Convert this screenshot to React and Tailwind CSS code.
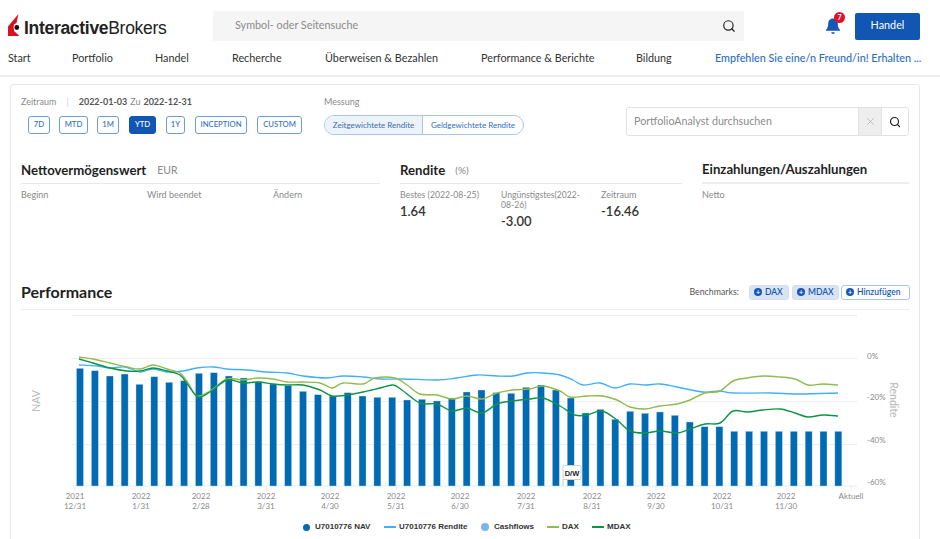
import React from 'react';
import { Search, X } from 'lucide-react';

const font = { fontFamily: 'Lato, sans-serif' };

const navItems = [
  { label: 'Start', cls: 'w-[64px]' },
  { label: 'Portfolio', cls: 'w-[83px]' },
  { label: 'Handel', cls: 'w-[77px]' },
  { label: 'Recherche', cls: 'w-[93px]' },
  { label: 'Überweisen & Bezahlen', cls: 'w-[156px]' },
  { label: 'Performance & Berichte', cls: 'w-[155px]' },
  { label: 'Bildung', cls: 'w-[79px]' },
];

const ranges = [
  { label: '7D', cls: 'w-[22px] mr-[9px]' },
  { label: 'MTD', cls: 'w-[29px] mr-[9px]' },
  { label: '1M', cls: 'w-[22px] mr-[10px]' },
  { label: 'YTD', cls: 'w-[27px] mr-[10px]', active: true },
  { label: '1Y', cls: 'w-[19px] mr-[10px]' },
  { label: 'INCEPTION', cls: 'w-[52px] mr-[10px]' },
  { label: 'CUSTOM', cls: 'w-[45px]' },
];

const tops = [
  368.3, 370.7, 376, 374, 384.3, 376.7, 382.3, 380.7, 373.3, 372.7, 376, 378, 381.7, 384, 385.7, 391.3, 394.7, 396,
  392.7, 396, 397.3, 397.3, 400, 399.3, 401, 398, 392, 390, 392.7, 393.3, 387.3, 385, 390, 398, 413, 409.3, 419.3, 411.3,
  413.3, 412, 415.3, 422, 426.7, 426.7, 431.3, 431.3, 431.3, 431.3, 431.3, 431.3, 431.3, 431.3,
];

// points read off the reference, in page pixels
const rendite = [
  [79, 365], [97, 366], [110, 368], [125, 367], [140, 372], [153, 369], [167, 372], [183, 371], [197, 368], [213, 367], [227, 369], [247, 370], [267, 372], [287, 373], [303, 376], [327, 378],
  [343, 376], [363, 377], [380, 379], [403, 379], [437, 380], [457, 378], [477, 375], [497, 376], [513, 376], [527, 373], [543, 373], [560, 375], [573, 380], [583, 385], [600, 383], [615, 388], [630, 384],
  [645, 385], [660, 384], [677, 387], [703, 392], [720, 391], [733, 393], [770, 393], [800, 394], [838, 393],
];
const dax = [
  [79, 357], [93, 359], [110, 363], [127, 367], [140, 369], [153, 365], [167, 369], [180, 373], [188, 383], [197, 396], [210, 391], [227, 379], [243, 380], [258, 378], [273, 379], [287, 382], [303, 382], [320, 383], [332, 388],
  [343, 383], [363, 384], [375, 378], [395, 378], [407, 385], [420, 394], [437, 395], [452, 399], [467, 396], [482, 399], [497, 393], [513, 390], [530, 389], [543, 386], [560, 391], [570, 397], [587, 396], [603, 396], [617, 400], [630, 407],
  [645, 409], [660, 406], [677, 404], [690, 400], [705, 393], [720, 391], [733, 381], [747, 378], [763, 376], [780, 377], [795, 379], [808, 385], [823, 384], [838, 385],
];
const mdax = [
  [79, 359], [93, 363], [110, 368], [127, 371], [140, 371], [153, 368], [167, 371], [180, 375], [188, 385], [198, 397], [210, 392], [227, 380], [243, 383], [258, 382], [273, 384], [287, 385], [303, 385], [320, 390], [332, 396],
  [347, 395], [363, 392], [380, 388], [393, 385], [402, 390], [420, 403], [437, 404], [452, 411], [467, 408], [482, 413], [497, 404], [513, 401], [530, 399], [543, 398], [560, 406], [575, 415], [587, 415], [602, 411], [617, 420], [630, 431],
  [645, 433], [660, 431], [677, 433], [690, 429], [705, 424], [720, 423], [733, 411], [747, 412], [763, 410], [780, 409], [795, 413], [808, 417], [823, 415], [838, 416],
];

// catmull-rom through the points so the lines stay soft
function smooth(pts) {
  let d = `M${pts[0][0]} ${pts[0][1]}`;
  for (let i = 0; i < pts.length - 1; i++) {
    const p0 = pts[i - 1] || pts[i];
    const p1 = pts[i];
    const p2 = pts[i + 1];
    const p3 = pts[i + 2] || p2;
    const c1x = p1[0] + (p2[0] - p0[0]) / 6;
    const c1y = p1[1] + (p2[1] - p0[1]) / 6;
    const c2x = p2[0] - (p3[0] - p1[0]) / 6;
    const c2y = p2[1] - (p3[1] - p1[1]) / 6;
    d += ` C${c1x} ${c1y} ${c2x} ${c2y} ${p2[0]} ${p2[1]}`;
  }
  return d;
}

const xTicks = [
  [75, '2021', '12/31'], [141, '2022', '1/31'], [201, '2022', '2/28'], [266, '2022', '3/31'], [330, '2022', '4/30'], [396, '2022', '5/31'],
  [460, '2022', '6/30'], [526, '2022', '7/31'], [592, '2022', '8/31'], [656, '2022', '9/30'], [722, '2022', '10/31'], [786, '2022', '11/30'],
];

const Logo = () => (
  <div className="flex items-end w-[213px] pl-[8px] h-[30px]">
    <svg width="12" height="22" viewBox="0 0 12 22" className="mb-[5px] shrink-0">
      <path d="M10.500 0 L0 12.500 V22 H11.500 L6 17 V10.500 L8.500 9 Z" fill="#d81222" />
      <circle cx="8.800" cy="13.500" r="3.200" fill="#ffffff" />
      <circle cx="8.800" cy="13.500" r="2.400" fill="#111111" />
    </svg>
    <div className="ml-[4px] mb-[2px] text-[17.500px] leading-[22px] tracking-[-0.3px] text-[#222]" style={{ fontFamily: '"Liberation Sans", sans-serif' }}>
      <span className="font-bold">Interactive</span>Brokers
    </div>
  </div>
);

const Chip = ({ label, cls, outline }) => (
  <div className={`h-[15px] rounded-[3px] flex items-center pl-[4px] gap-[3px] text-[8.500px] font-semibold text-[#1558b8] border ${outline ? 'border-[#a9c6ea] bg-white' : 'border-[#d3deee] bg-[#d9e3f2]'} ${cls}`}>
    <span className="w-[8px] h-[8px] rounded-full bg-[#1558b8] flex items-center justify-center text-white text-[8px] leading-none">+</span>
    {label}
  </div>
);

const LegendLine = ({ color }) => <span className="w-[12px] h-[2px] mr-[3px]" style={{ background: color }} />;

export default function App() {
  return (
    <div className="w-[940px] h-[539px] overflow-hidden bg-white text-[#333]" style={font}>
      <header className="h-[77px] border-b-2 border-[#eeeeee]">
        <div className="flex items-center h-[41px] pt-[11px]">
          <Logo />
          <div className="w-[531px] h-[30px] bg-[#f5f5f5] rounded-[2px] flex items-center justify-between pl-[22px] pr-[8px] text-[10.800px] text-[#8b8b8b]">
            <span className="pb-[2px]">Symbol- oder Seitensuche</span>
            <Search size={14} className="text-[#222]" />
          </div>
          <div className="relative ml-[81px] w-[16px] h-[18px]">
            <svg width="16" height="18" viewBox="0 0 16 18">
              <path d="M8 1.500c-3 0-4.800 2.300-4.800 5.200 0 3-.7 4.600-2.200 6v1.100h14v-1.100c-1.500-1.400-2.200-3-2.200-6C12.800 3.800 11 1.500 8 1.500z" fill="#1558b8" />
              <path d="M6.200 15.200h3.600a1.800 1.800 0 0 1-3.600 0z" fill="#1558b8" />
            </svg>
            <span className="absolute -top-[5px] left-[9px] w-[11px] h-[11px] rounded-full bg-[#e0112b] text-white text-[7px] font-bold flex items-center justify-center">7</span>
          </div>
          <button className="ml-[14px] w-[65px] h-[27px] pb-[2px] bg-[#1156b3] rounded-[2px] text-white text-[10.800px]">Handel</button>
        </div>
        <nav className="flex items-center h-[34px] pl-[8px] text-[10.800px] text-[#333]">
          {navItems.map((n) => (
            <span key={n.label} className={n.cls}>{n.label}</span>
          ))}
          <span className="text-[#2a6fc4] font-medium whitespace-nowrap">Empfehlen Sie eine/n Freund/in! Erhalten ...</span>
        </nav>
      </header>

      <main className="ml-[10px] mt-[7px] w-[910px] h-[500px] border border-[#e6e6e6] rounded-t-[3px] px-[10px]">
        <div className="flex h-[60px]">
          <div className="w-[303px] pt-[11px]">
            <div className="flex items-center h-[12px] text-[9px] text-[#8a8a8a]">
              <span>Zeitraum</span>
              <span className="mx-[10px] text-[#ccc]">|</span>
              <span className="font-bold text-[#555]">2022-01-03</span>
              <span className="mx-[3px]">Zu</span>
              <span className="font-bold text-[#555]">2022-12-31</span>
            </div>
            <div className="flex mt-[8px] ml-[7px]">
              {ranges.map((r) => (
                <button key={r.label} className={`h-[18px] rounded-[3px] border text-[7.700px] font-medium ${r.active ? 'bg-[#1156b3] border-[#1156b3] text-white font-bold' : 'border-[#6f9ddb] text-[#2f6fc2]'} ${r.cls}`}>
                  {r.label}
                </button>
              ))}
            </div>
          </div>
          <div className="w-[302px] pt-[11px]">
            <div className="h-[12px] flex items-center text-[9px] text-[#8a8a8a]">Messung</div>
            <div className="flex mt-[7px] w-[200px] h-[20px] rounded-full border border-[#a9c6ea] text-[8px] text-[#2f6fc2] overflow-hidden">
              <div className="w-[98px] bg-[#edf3fb] flex items-center justify-center text-[#3a6da8] border-r border-[#a9c6ea]">Zeitgewichtete Rendite</div>
              <div className="flex-1 flex items-center justify-center">Geldgewichtete Rendite</div>
            </div>
          </div>
          <div className="mt-[22px] w-[283px] h-[29px] flex border border-[#e2e2e2] rounded-[3px] overflow-hidden">
            <div className="w-[231px] flex items-center pl-[7px] text-[10.700px] text-[#8b8b8b]">PortfolioAnalyst durchsuchen</div>
            <div className="w-[24px] bg-[#eeeeee] border-x border-[#e2e2e2] flex items-center justify-center text-[#b5b5b5]"><X size={11} /></div>
            <div className="flex-1 flex items-center justify-center text-[#222]"><Search size={12} strokeWidth={2.4} /></div>
          </div>
        </div>

        <div className="flex mt-[17px] h-[123px]">
          <section className="w-[359px]">
            <div className="h-[22px] flex items-center border-b border-[#e8e8e8] pb-[4px]">
              <span className="text-[13.200px] font-bold text-[#1f1f1f]">Nettovermögenswert</span>
              <span className="ml-[11px] text-[10.500px] text-[#8a8a8a]">EUR</span>
            </div>
            <div className="flex mt-[6px] text-[9px] text-[#8a8a8a] leading-[10px]">
              <span className="w-[126px]">Beginn</span>
              <span className="w-[126px]">Wird beendet</span>
              <span>Ändern</span>
            </div>
          </section>
          <section className="ml-[20px] w-[282px]">
            <div className="h-[22px] flex items-center border-b border-[#e8e8e8] pb-[4px]">
              <span className="text-[13.200px] font-bold text-[#1f1f1f]">Rendite</span>
              <span className="ml-[10px] text-[10px] text-[#8a8a8a]">(%)</span>
            </div>
            <div className="flex mt-[6px] text-[9px] text-[#8a8a8a] leading-[10px]">
              <div className="w-[101px]">
                <div className="text-[8.700px]">Bestes (2022-08-25)</div>
                <div className="mt-[6px] text-[13px] leading-[11px] font-semibold text-[#333]">1.64</div>
              </div>
              <div className="w-[100px]">
                <div className="w-[88px] text-[8.600px]">Ungünstigstes(2022-08-26)</div>
                <div className="mt-[6px] text-[13px] leading-[11px] font-semibold text-[#333]">-3.00</div>
              </div>
              <div>
                <div>Zeitraum</div>
                <div className="mt-[6px] text-[13px] leading-[11px] font-semibold text-[#333]">-16.46</div>
              </div>
            </div>
          </section>
          <section className="ml-[20px] w-[207px]">
            <div className="h-[22px] flex items-center border-b-2 border-[#eeeeee] pb-[4px]">
              <span className="text-[13.200px] font-bold text-[#1f1f1f] whitespace-nowrap">Einzahlungen/Auszahlungen</span>
            </div>
            <div className="mt-[6px] text-[9px] text-[#8a8a8a] leading-[10px]">Netto</div>
          </section>
        </div>

        <div className="flex items-center justify-between h-[25px] border-b border-[#eeeeee] pb-[10px] w-[889px]">
          <span className="text-[16px] font-bold text-[#1f1f1f]">Performance</span>
          <div className="flex items-center">
            <span className="text-[8.800px] text-[#555] mr-[10px]">Benchmarks:</span>
            <Chip label="DAX" cls="w-[40px] mr-[3px]" />
            <Chip label="MDAX" cls="w-[47px] mr-[2px]" />
            <Chip label="Hinzufügen" cls="w-[69px]" outline />
          </div>
        </div>

        <svg width="889" height="204" viewBox="21 310 889 204" className="block">
          <g stroke="#eeeeee" strokeWidth="1">
            <line x1="72" x2="857" y1="315.500" y2="315.500" />
            <line x1="72" x2="857" y1="358.500" y2="358.500" />
            <line x1="72" x2="857" y1="401.500" y2="401.500" />
            <line x1="72" x2="857" y1="444.500" y2="444.500" />
          </g>
          <line x1="72" x2="857" y1="486" y2="486" stroke="#e6ebf5" />
          {xTicks.map(([x]) => (
            <line key={x} x1={x} x2={x} y1="486" y2="490" stroke="#e6ebf5" />
          ))}
          <line x1="851" x2="851" y1="486" y2="490" stroke="#e6ebf5" />
          {tops.map((t, i) => (
            <rect key={i} x={76.500 + i * 14.870} y={t} width="7" height={486 - t} fill="#006bb3" stroke="#cfe2f3" strokeWidth="0.400" />
          ))}
          <path d={smooth(rendite)} fill="none" stroke="#3fb0f8" strokeWidth="1.300" />
          <path d={smooth(dax)} fill="none" stroke="#8fbb4f" strokeWidth="1.400" />
          <path d={smooth(mdax)} fill="none" stroke="#0d9547" strokeWidth="1.400" />
          <line x1="563" x2="563" y1="479" y2="486" stroke="#cccccc" />
          <rect x="563" y="465.500" width="18" height="14" rx="1" fill="#ffffff" stroke="#d0d0d0" />
          <text x="572" y="475.500" textAnchor="middle" fontSize="7.500" fontWeight="700" fill="#222" style={{ fontFamily: '"Liberation Sans", sans-serif' }}>D/W</text>
          <g fontSize="8" fill="#8a8a8a">
            {xTicks.map(([x, a, b]) => (
              <text key={x} x={x} textAnchor="middle">
                <tspan x={x} y="499">{a}</tspan>
                <tspan x={x} y="509">{b}</tspan>
              </text>
            ))}
            <text x="851" y="499" textAnchor="middle">Aktuell</text>
            <text x="867" y="358.500">0%</text>
            <text x="867" y="400">-20%</text>
            <text x="867" y="443">-40%</text>
            <text x="867" y="485">-60%</text>
          </g>
          <text transform="translate(40 401) rotate(-90)" textAnchor="middle" fontSize="10.500" fill="#b5b5b5">NAV</text>
          <text transform="translate(890 400) rotate(90)" textAnchor="middle" fontSize="10.500" fill="#b5b5b5">Rendite</text>
        </svg>

        <div className="flex items-center h-[16px] mt-[5px] pl-[282px] text-[8px] font-bold text-[#333] whitespace-nowrap" style={{ fontFamily: '"Liberation Sans", sans-serif' }}>
          <span className="w-[7px] h-[7px] rounded-full bg-[#006bb3] mr-[5px]" />
          <span className="w-[69px]">U7010776 NAV</span>
          <LegendLine color="#3fb0f8" />
          <span className="w-[82px]">U7010776 Rendite</span>
          <span className="w-[8px] h-[8px] rounded-full bg-[#7cb5ec] mr-[5px]" />
          <span className="w-[53px]">Cashflows</span>
          <LegendLine color="#8fbb4f" />
          <span className="w-[30px]">DAX</span>
          <LegendLine color="#0d9547" />
          <span>MDAX</span>
        </div>
      </main>
    </div>
  );
}
